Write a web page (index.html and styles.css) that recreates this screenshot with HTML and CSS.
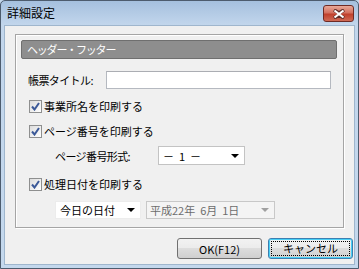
FILE: index.html
```html
<!DOCTYPE html>
<html lang="ja">

<head>
    <meta charset="UTF-8">
    <meta name="viewport" content="width=device-width, initial-scale=1.0">
    <title>詳細設定</title>

    <link rel="stylesheet" href="styles.css">
</head>

<body>
    <div class="window">
        <div class="titlebar">
            <span class="title">詳細設定</span>
            <span class="close">
                <svg width="16" height="10" viewBox="0 0 16 10">
                    <path d="M3 1 L8 4 L13 1 M3 9 L8 6 L13 9 M8 4 L8 6" stroke="#5b2a25" stroke-width="3.6" fill="none"/>
                    <path d="M3.5 1.5 L12.5 8.5 M12.5 1.5 L3.5 8.5" stroke="#fff" stroke-width="2.2" fill="none"/>
                </svg>
            </span>
        </div>

        <div class="client">
            <div class="group">
                <div class="group-head">ヘッダー・フッター</div>

                <div class="row row-title">
                    <label for="title" class="label-title">帳票タイトル:</label>
                    <input type="text" id="title" class="textbox">
                </div>

                <div class="row row-cb1">
                    <span class="check"><svg width="9" height="9" viewBox="0 0 9 9"><path d="M1 4.5 L3.5 7.5 L8 1" stroke="#3b5998" stroke-width="2" fill="none"/></svg></span>
                    <span>事業所名を印刷する</span>
                </div>

                <div class="row row-cb2">
                    <span class="check"><svg width="9" height="9" viewBox="0 0 9 9"><path d="M1 4.5 L3.5 7.5 L8 1" stroke="#3b5998" stroke-width="2" fill="none"/></svg></span>
                    <span>ページ番号を印刷する</span>
                </div>

                <div class="row row-format">
                    <span class="label-format">ページ番号形式:</span>
                    <div class="combo combo-format">
                        <span>－&nbsp;&nbsp;1&nbsp;&nbsp;－</span>
                        <span class="arrow"></span>
                    </div>
                </div>

                <div class="row row-cb3">
                    <span class="check"><svg width="9" height="9" viewBox="0 0 9 9"><path d="M1 4.5 L3.5 7.5 L8 1" stroke="#3b5998" stroke-width="2" fill="none"/></svg></span>
                    <span>処理日付を印刷する</span>
                </div>

                <div class="row row-date">
                    <div class="combo combo-day">
                        <span>今日の日付</span>
                        <span class="arrow"></span>
                    </div>
                    <div class="combo combo-date">
                        <span>平成22年&nbsp;&nbsp;6月&nbsp;&nbsp;1日</span>
                        <span class="arrow arrow-off"></span>
                    </div>
                </div>
            </div>

            <div class="buttons">
                <button class="btn">OK(F12)</button>
                <button class="btn btn-focus"><span class="focus-rect">キャンセル</span></button>
            </div>
        </div>
    </div>
</body>

</html>
```

FILE: styles.css
```css
* {
    box-sizing: border-box;
    padding: 0;
    margin: 0;
}

body {
    background-color: #c3d7ec;
    font-family: "Noto Sans CJK JP", "Liberation Sans", sans-serif;
    font-size: 11px;
    color: #000;
}

.window {
    width: 359px;
    height: 269px;
    border: 1px solid #4d5c6e;
    border-radius: 5px 5px 0 0;
    background: linear-gradient(#a5c0de, #c2d6ec 24px, #c4d8ed);
    display: flex;
    flex-direction: column;
}

.titlebar {
    height: 24px;
    display: flex;
    justify-content: space-between;
    align-items: flex-start;
    padding-left: 6px;
}

.title {
    font-size: 12px;
    line-height: 24px;
}

.close {
    width: 31px;
    height: 17px;
    margin-top: 4px;
    margin-right: 4px;
    border: 1px solid #6e2a24;
    border-radius: 3px;
    background: linear-gradient(#e8a898, #d3705f 45%, #c0402c 55%, #cf6a55);
    display: flex;
    justify-content: center;
    align-items: center;
}

.client {
    flex: 1;
    margin: 0 3px 3px 3px;
    background-color: #f0f0f0;
    border: 1px solid #9fb6cd;
    display: flex;
    flex-direction: column;
}

.group {
    height: 194px;
    margin: 8px 10px 0 10px;
    padding: 5px 6px 0 5px;
    border: 1px solid #a5a5a5;
    box-shadow: inset 1px 1px 0 #fff, 1px 1px 0 #fff;
    display: flex;
    flex-direction: column;
}

.group-head {
    height: 19px;
    background-color: #8e8e8e;
    border: 1px solid #6f6f6f;
    border-radius: 2px;
    color: white;
    font-size: 11px;
    line-height: 17px;
    padding-left: 5px;
    letter-spacing: -1.2px;
}

.row {
    display: flex;
    align-items: center;
    height: 18px;
}

.row-title {
    margin-top: 12px;
    padding-left: 7px;
}

.label-title {
    width: 78px;
    letter-spacing: -0.6px;
}

.textbox {
    width: 225px;
    height: 18px;
    border: 1px solid #b5b9c0;
    border-top-color: #abadb3;
    background-color: white;
}

.row-cb1 {
    margin-top: 8px;
    padding-left: 8px;
}

.row-cb2 {
    margin-top: 7px;
    padding-left: 8px;
}

.row-cb3 {
    margin-top: 10px;
    padding-left: 8px;
}

.check {
    width: 13px;
    height: 13px;
    margin-right: 2px;
    border: 1px solid #8e8f8f;
    background: linear-gradient(135deg, #dcdcdc, #fff);
    display: flex;
    justify-content: center;
    align-items: center;
}

.row-format {
    height: 19px;
    margin-top: 6px;
    padding-left: 34px;
}

.label-format {
    width: 103px;
    letter-spacing: -0.6px;
}

.combo {
    height: 18px;
    background-color: white;
    border: 1px solid #d8d8d8;
    display: flex;
    align-items: center;
    justify-content: space-between;
    padding: 0 5px 0 4px;
}

.combo-format {
    width: 87px;
    height: 19px;
    border-color: #c3c3c3;
}

.row-date {
    margin-top: 8px;
    padding-left: 34px;
    gap: 5px;
}

.combo-day {
    width: 86px;
    border-color: #ececec;
}

.combo-date {
    width: 129px;
    background-color: #f4f4f4;
    border-color: #c8c8c8;
    color: #6d6d6d;
    padding-left: 3px;
}

.arrow {
    width: 0;
    height: 0;
    border-left: 4px solid transparent;
    border-right: 4px solid transparent;
    border-top: 4px solid #000;
}

.arrow-off {
    border-top-color: #a0a0a0;
}

.buttons {
    display: flex;
    justify-content: flex-end;
    gap: 6px;
    margin-top: 10px;
    padding-right: 1px;
}

.btn {
    width: 85px;
    height: 21px;
    border: 1px solid #707070;
    border-radius: 3px;
    background: linear-gradient(#f2f2f2, #ebebeb 50%, #dddddd 50%, #cfcfcf);
    font-family: "Noto Sans CJK JP", "Liberation Sans", sans-serif;
    font-size: 11px;
    color: #000;
}

.btn-focus {
    border-color: #3c7fb1;
    box-shadow: inset 0 0 0 1px #48d0f6;
    padding: 2px;
}

.focus-rect {
    display: block;
    height: 100%;
    border: 1px dotted #000;
    line-height: 13px;
}
```
